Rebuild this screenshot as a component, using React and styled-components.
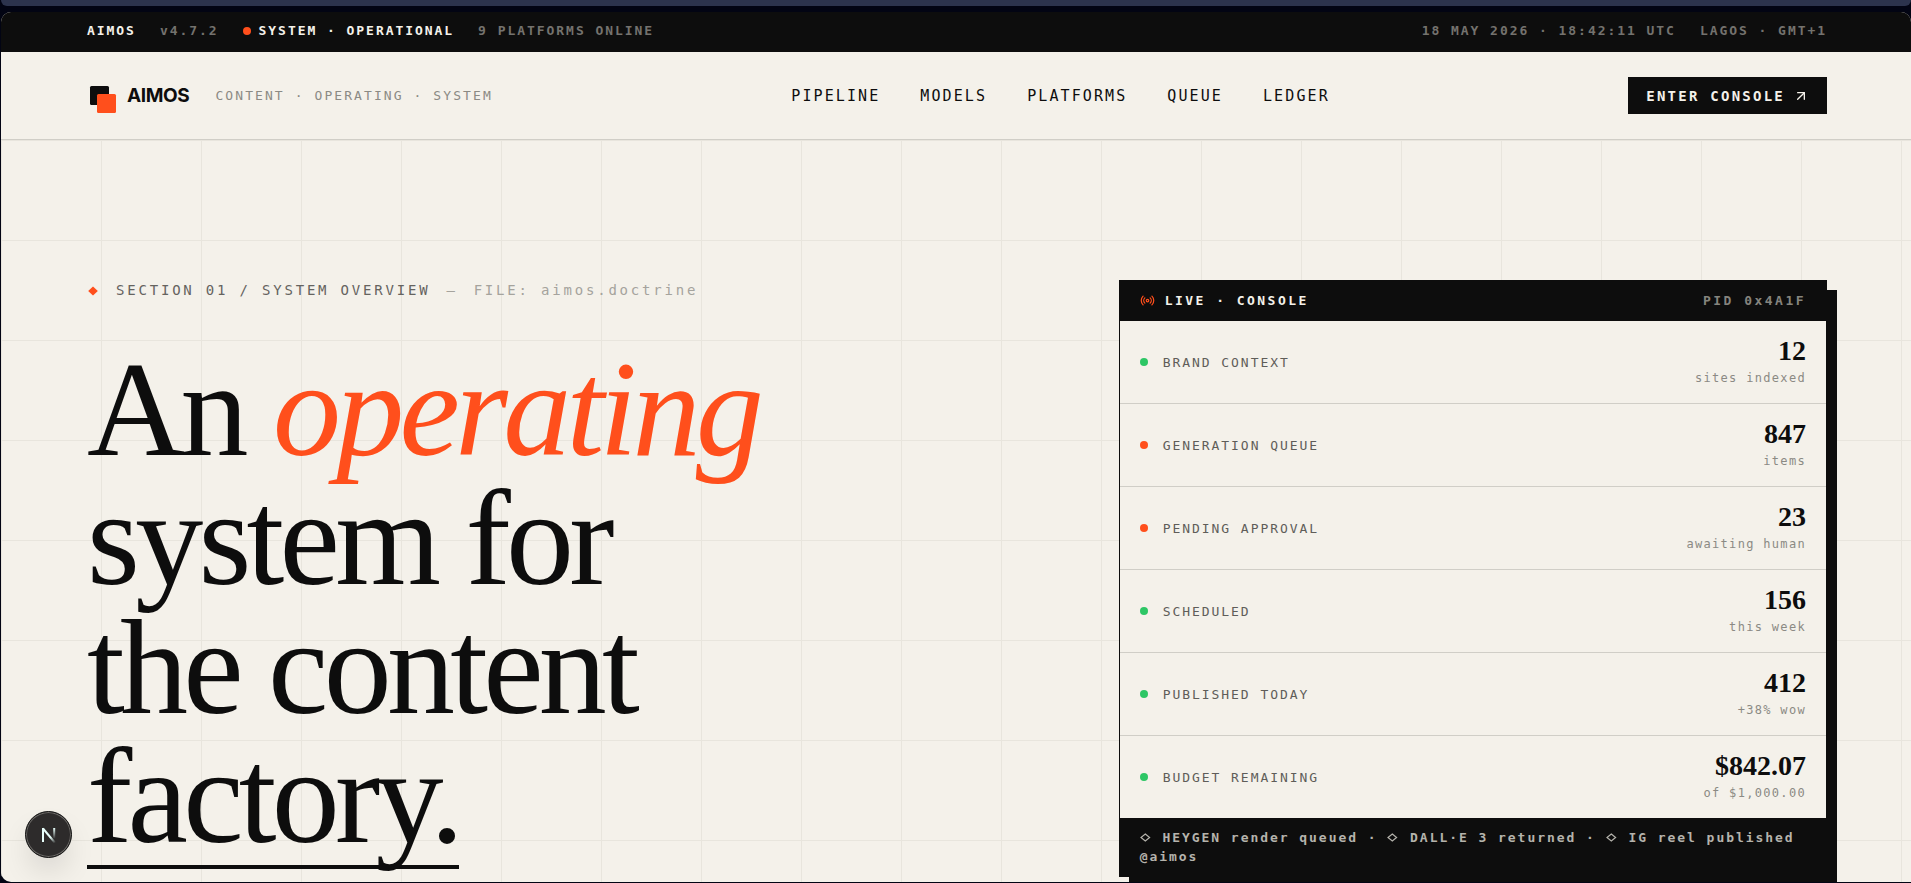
import styled, { createGlobalStyle, ThemeProvider } from 'styled-components';
import { ArrowUpRight, Radio } from 'lucide-react';

const theme = {
  colors: {
    ink: '#0d0d0d',
    paper: '#f4f1ea',
    signal: '#ff4f1c',
    live: '#2dc665',
    rule: '#d0cec7',
    grid: '#e8e5dd',
  },
  fonts: {
    mono: "'DejaVu Sans Mono', 'Liberation Mono', monospace",
    serif: "'Liberation Serif', serif",
    sans: "Inter, 'Liberation Sans', sans-serif",
  },
};

const links = ['PIPELINE', 'MODELS', 'PLATFORMS', 'QUEUE', 'LEDGER'];

const metrics = [
  { label: 'BRAND CONTEXT', value: '12', note: 'sites indexed', color: 'live' },
  { label: 'GENERATION QUEUE', value: '847', note: 'items', color: 'signal' },
  { label: 'PENDING APPROVAL', value: '23', note: 'awaiting human', color: 'signal' },
  { label: 'SCHEDULED', value: '156', note: 'this week', color: 'live' },
  { label: 'PUBLISHED TODAY', value: '412', note: '+38% wow', color: 'live' },
  { label: 'BUDGET REMAINING', value: '$842.07', note: 'of $1,000.00', color: 'live' },
];

const Logo = () => (
  <svg width="36" height="37" viewBox="0 0 36 37" aria-hidden="true">
    <rect x="3" y="9" width="19" height="19" rx="1.5" fill="#0d0d0d" />
    <rect x="10" y="17" width="19" height="19" rx="1.5" fill="#ff4f1c" />
  </svg>
);

const Diamond = () => (
  <svg width="13" height="12" viewBox="0 0 13 12" aria-hidden="true">
    <path d="M6 1.5 10.8 6 6 10.5 1.2 6Z" fill="#ff4f1c" />
  </svg>
);

const TickerMark = () => (
  <svg width="13" height="9" viewBox="0 0 13 9" aria-hidden="true">
    <path d="M5.3 1 9.6 4.5 5.3 8 1 4.5Z" fill="none" stroke="currentColor" strokeWidth="1.2" />
  </svg>
);

const DevMark = () => (
  <svg width="18" height="18" viewBox="0 0 18 18" fill="none" aria-hidden="true">
    <defs>
      <linearGradient id="diag" x1="11" y1="11" x2="15" y2="17" gradientUnits="userSpaceOnUse">
        <stop stopColor="#e8fffb" />
        <stop offset="1" stopColor="#e8fffb" stopOpacity="0" />
      </linearGradient>
      <linearGradient id="stem" x1="14" y1="2" x2="14" y2="13" gradientUnits="userSpaceOnUse">
        <stop stopColor="#e8fffb" />
        <stop offset="1" stopColor="#e8fffb" stopOpacity="0" />
      </linearGradient>
    </defs>
    <path d="M3 2.5 15.5 17.5" stroke="url(#diag)" strokeWidth="2" />
    <path d="M3 16V2" stroke="#e8fffb" strokeWidth="2" />
    <path d="M14.2 2V12.5" stroke="url(#stem)" strokeWidth="2" />
  </svg>
);

const App = () => (
  <ThemeProvider theme={theme}>
    <GlobalStyle />
    <Screen>
      <BrowserEdge />
      <Page>
        <StatusBar>
          <StatusGroup>
            <Status $bright>AIMOS</Status>
            <Status>v4.7.2</Status>
            <Status $bright>
              <Dot $color="signal" />
              SYSTEM · OPERATIONAL
            </Status>
            <Status>9 PLATFORMS ONLINE</Status>
          </StatusGroup>
          <StatusGroup>
            <Status>18 MAY 2026 · 18:42:11 UTC</Status>
            <Status>LAGOS · GMT+1</Status>
          </StatusGroup>
        </StatusBar>

        <Header>
          <Brand>
            <BrandLink href="#">
              <Logo />
              AIMOS
            </BrandLink>
            <Tagline>CONTENT · OPERATING · SYSTEM</Tagline>
          </Brand>
          <Nav>
            {links.map(link => (
              <NavLink key={link} href={`#${link.toLowerCase()}`}>
                {link}
              </NavLink>
            ))}
          </Nav>
          <ConsoleButton type="button">
            ENTER CONSOLE
            <ArrowUpRight size={16} />
          </ConsoleButton>
        </Header>

        <Hero>
          <Intro>
            <Eyebrow>
              <Diamond />
              <span>SECTION 01 / SYSTEM OVERVIEW</span>
              <Faint>—</Faint>
              <Faint>FILE: aimos.doctrine</Faint>
            </Eyebrow>
            <Title>
              An <em>operating</em>
              <br />
              system for
              <br />
              the content
              <br />
              <Underlined>factory.</Underlined>
            </Title>
          </Intro>

          <Console>
            <ConsoleHead>
              <ConsoleTitle>
                <Radio size={15} />
                LIVE · CONSOLE
              </ConsoleTitle>
              <Pid>PID 0x4A1F</Pid>
            </ConsoleHead>
            {metrics.map(({ label, value, note, color }) => (
              <Metric key={label}>
                <MetricLabel>
                  <Dot $color={color} />
                  {label}
                </MetricLabel>
                <MetricData>
                  <Value>{value}</Value>
                  <Note>{note}</Note>
                </MetricData>
              </Metric>
            ))}
            <Ticker>
              <TickerMark /> HEYGEN render queued · <TickerMark /> DALL·E 3 returned ·{' '}
              <TickerMark /> IG reel published <span>@aimos</span>
            </Ticker>
          </Console>
        </Hero>
      </Page>
      <DevButton type="button" aria-label="Open dev tools">
        <DevMark />
      </DevButton>
    </Screen>
  </ThemeProvider>
);
export default App;

const GlobalStyle = createGlobalStyle`
  *, *::before, *::after {
    box-sizing: border-box;
  }

  body {
    margin: 0;
    background: #020413;
  }
`;

const Screen = styled.div`
  position: relative;
  display: flex;
  flex-direction: column;
  gap: 6px;
  height: 100vh;
  padding: 0 0 1px 1px;
  overflow: hidden;
  font-family: ${({ theme }) => theme.fonts.mono};
  color: ${({ theme }) => theme.colors.ink};
`;

const BrowserEdge = styled.div`
  flex: none;
  height: 6px;
  background: #2c334d;
  border-radius: 0 0 8px 8px;
`;

const Page = styled.div`
  flex: 1;
  min-height: 0;
  display: flex;
  flex-direction: column;
  overflow: hidden;
  border-radius: 10px 10px 0 10px;
  background: ${({ theme }) => theme.colors.paper};
`;

const StatusBar = styled.div`
  flex: none;
  display: flex;
  align-items: center;
  justify-content: space-between;
  height: 40px;
  padding: 0 84px 2px 86px;
  background: ${({ theme }) => theme.colors.ink};
`;

const StatusGroup = styled.div`
  display: flex;
  gap: 24px;
`;

const Status = styled.span`
  display: flex;
  align-items: center;
  gap: 8px;
  font-size: 13px;
  font-weight: 700;
  line-height: 20px;
  letter-spacing: 0.15em;
  color: ${({ $bright, theme }) => ($bright ? theme.colors.paper : '#74726e')};
  white-space: nowrap;
`;

const Dot = styled.span`
  flex: none;
  width: 8px;
  height: 8px;
  border-radius: 50%;
  background: ${({ $color, theme }) => theme.colors[$color]};
`;

const Header = styled.header`
  flex: none;
  display: flex;
  align-items: center;
  justify-content: space-between;
  padding: 25px 84px 25px 86px;
  border-bottom: 1px solid ${({ theme }) => theme.colors.rule};
`;

const Brand = styled.div`
  display: flex;
  align-items: center;
  gap: 26px;
`;

const BrandLink = styled.a`
  display: flex;
  align-items: center;
  gap: 4px;
  font-family: ${({ theme }) => theme.fonts.sans};
  font-size: 19px;
  font-weight: 700;
  letter-spacing: -0.02em;
  color: inherit;
  text-decoration: none;
`;

const Tagline = styled.span`
  font-size: 13px;
  letter-spacing: 0.16em;
  color: #8b8a84;
  white-space: nowrap;
`;

const Nav = styled.nav`
  display: flex;
  gap: 40px;
`;

const NavLink = styled.a`
  font-size: 15px;
  letter-spacing: 0.14em;
  color: inherit;
  text-decoration: none;
`;

const ConsoleButton = styled.button`
  display: flex;
  align-items: center;
  gap: 8px;
  height: 37px;
  padding: 0 18px;
  border: 0;
  background: ${({ theme }) => theme.colors.ink};
  color: ${({ theme }) => theme.colors.paper};
  font-family: inherit;
  font-size: 14px;
  font-weight: 700;
  letter-spacing: 0.16em;
  white-space: nowrap;
  cursor: pointer;
`;

const Hero = styled.main`
  flex: 1;
  min-height: 0;
  display: grid;
  grid-template-columns: minmax(0, 7fr) minmax(0, 5fr);
  align-items: start;
  gap: 40px;
  padding: 140px 84px 140px 86px;
  background-image: linear-gradient(${({ theme }) => theme.colors.grid} 1px, transparent 1px),
    linear-gradient(90deg, ${({ theme }) => theme.colors.grid} 1px, transparent 1px);
  background-size: 100px 100px;
`;

const Intro = styled.div`
  display: flex;
  flex-direction: column;
  gap: 44px;
`;

const Eyebrow = styled.div`
  display: flex;
  align-items: center;
  gap: 16px;
  font-size: 14px;
  line-height: 21px;
  letter-spacing: 0.2em;
  color: #65635f;
  white-space: nowrap;
`;

const Faint = styled.span`
  color: #a5a39d;
`;

const Title = styled.h1`
  margin: 0;
  font-family: ${({ theme }) => theme.fonts.serif};
  font-size: 136px;
  font-weight: 400;
  line-height: 129px;
  letter-spacing: -0.035em;
  white-space: nowrap;

  em {
    color: ${({ theme }) => theme.colors.signal};
  }
`;

const Underlined = styled.span`
  display: inline-block;
  padding-bottom: 4px;
  border-bottom: 4px solid ${({ theme }) => theme.colors.ink};
`;

const Console = styled.section`
  border: 1px solid ${({ theme }) => theme.colors.ink};
  background: ${({ theme }) => theme.colors.paper};
  box-shadow: 10px 10px 0 ${({ theme }) => theme.colors.ink};
`;

const ConsoleHead = styled.div`
  display: flex;
  align-items: center;
  justify-content: space-between;
  height: 40px;
  padding: 0 20px 2px;
  background: ${({ theme }) => theme.colors.ink};
  font-size: 13px;
  font-weight: 700;
  letter-spacing: 0.19em;
`;

const ConsoleTitle = styled.div`
  display: flex;
  align-items: center;
  gap: 10px;
  color: ${({ theme }) => theme.colors.paper};

  svg {
    color: ${({ theme }) => theme.colors.signal};
  }
`;

const Pid = styled.span`
  color: #85847e;
`;

const Metric = styled.div`
  display: flex;
  align-items: center;
  justify-content: space-between;
  padding: 16px 20px;

  & + & {
    border-top: 1px solid ${({ theme }) => theme.colors.rule};
  }
`;

const MetricLabel = styled.div`
  display: flex;
  align-items: center;
  gap: 15px;
  font-size: 13px;
  letter-spacing: 0.15em;
  color: #5f5d59;
`;

const MetricData = styled.div`
  display: flex;
  flex-direction: column;
  align-items: flex-end;
  gap: 4px;
`;

const Value = styled.span`
  font-family: ${({ theme }) => theme.fonts.serif};
  font-size: 28px;
  font-weight: 700;
  line-height: 28px;
`;

const Note = styled.span`
  font-size: 12px;
  line-height: 18px;
  letter-spacing: 0.11em;
  color: #8b8a84;
`;

const Ticker = styled.div`
  padding: 10px 20px;
  background: ${({ theme }) => theme.colors.ink};
  color: #b5b3ac;
  font-size: 13px;
  font-weight: 700;
  line-height: 19px;
  letter-spacing: 0.15em;
`;

const DevButton = styled.button`
  position: absolute;
  left: 25px;
  bottom: 25px;
  display: flex;
  align-items: center;
  justify-content: center;
  width: 47px;
  height: 47px;
  padding: 0;
  border: 1px solid #141414;
  border-radius: 50%;
  background: #2d2b2b;
  box-shadow: inset 0 0 0 1px #6b6966, 0 16px 32px -8px rgba(0, 0, 0, 0.2);
`;
